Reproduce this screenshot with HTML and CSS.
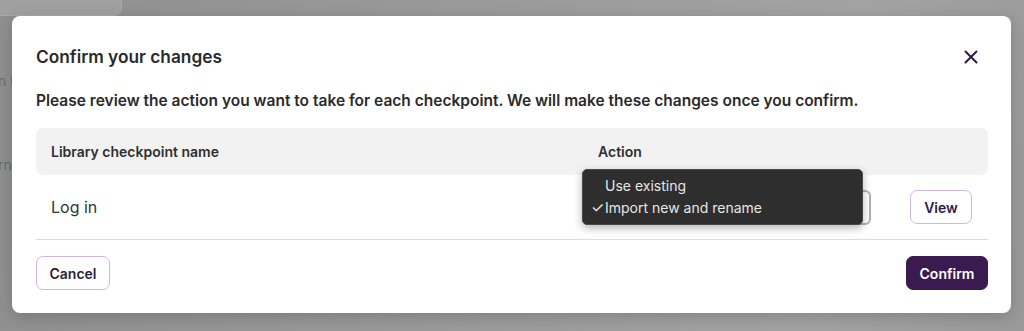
FILE: index.html
```html
<!DOCTYPE html>
<html>
<head>
<meta charset="utf-8">
<link rel="stylesheet" href="styles.css">
</head>
<body>
<div class="backdrop">
  <div class="ghost-card"></div>
  <div class="ghost-text">n t</div>
  <div class="ghost-text2">rn</div>
  <div class="modal">
    <div class="modal-head">
      <h1 class="title">Confirm your changes</h1>
      <button class="close" aria-label="Close">
        <svg width="14" height="14" viewBox="0 0 14 14"><path d="M1.5 1.5L12.5 12.5M12.5 1.5L1.5 12.5" stroke="#2e1a47" stroke-width="2" stroke-linecap="round"/></svg>
      </button>
    </div>
    <p class="desc">Please review the action you want to take for each checkpoint. We will make these changes once you confirm.</p>
    <div class="table">
      <div class="thead">
        <div class="th name-col">Library checkpoint name</div>
        <div class="th action-col">Action</div>
      </div>
      <div class="trow">
        <div class="td name-col">Log in</div>
        <div class="td action-cell">
          <div class="select">
            <div class="menu">
              <div class="opt"><span class="check"></span>Use existing</div>
              <div class="opt"><span class="check">✓</span>Import new and rename</div>
            </div>
          </div>
          <button class="btn btn-outline view">View</button>
        </div>
      </div>
    </div>
    <div class="footer">
      <button class="btn btn-outline cancel">Cancel</button>
      <button class="btn btn-primary">Confirm</button>
    </div>
  </div>
</div>
</body>
</html>
```
FILE: styles.css
```css
* { box-sizing: border-box; }
html, body { margin: 0; padding: 0; }
body {
  font-family: Inter, "Noto Sans", "Liberation Sans", sans-serif;
  width: 1024px;
  height: 331px;
  overflow: hidden;
}
.backdrop {
  position: relative;
  width: 1024px;
  height: 331px;
  background: linear-gradient(100deg, #8f8f8f 0%, #999 40%, #a3a3a3 80%, #9a9a9a 100%);
  padding: 16px 13px 18px 12px;
}
.ghost-card {
  position: absolute;
  left: -10px; top: -10px;
  width: 132px; height: 26px;
  border: 1px solid #a8a8a8;
  border-radius: 8px;
  background: #a0a0a0;
}
.ghost-text {
  position: absolute; left: -2px; top: 72px;
  color: #6a6a6a; font-size: 14px;
}
.ghost-text2 {
  position: absolute; left: -2px; top: 156px;
  color: #6a6a6a; font-size: 14px;
}
.modal {
  position: relative;
  background: #fff;
  border-radius: 8px;
  width: 999px;
  height: 297px;
  padding: 29px 23px 0 24px;
  box-shadow: 0 4px 16px rgba(0,0,0,0.18);
}
.modal-head {
  display: flex;
  align-items: center;
  justify-content: space-between;
  height: 24px;
}
.title {
  margin: 0;
  font-size: 17.3px;
  line-height: 24px;
  font-weight: 600;
  color: #2a2a2a;
}
.close {
  border: 0;
  background: transparent;
  padding: 0;
  width: 14px; height: 14px;
  margin-right: 10px;
  display: flex;
}
.desc {
  margin: 22px 0 0;
  font-size: 15.5px;
  line-height: 20px;
  font-weight: 600;
  color: #2a2a2a;
}
.table {
  margin-top: 17px;
  width: 952px;
}
.thead {
  display: grid;
  grid-template-columns: 547px 405px;
  height: 47px;
  align-items: center;
  background: #f2f2f2;
  border-radius: 7px;
}
.th {
  padding-left: 15px;
  font-size: 14px;
  font-weight: 600;
  color: #2f2f2f;
}
.trow {
  display: grid;
  grid-template-columns: 547px 405px;
  height: 65px;
  align-items: center;
  border-bottom: 1px solid #dcdcdc;
}
.td.name-col {
  padding-left: 15px;
  font-size: 16px;
  color: #333;
  padding-bottom: 1px;
}
.action-cell {
  display: flex;
  align-items: center;
  padding: 0 16px 0 7px;
}
.select {
  position: relative;
  width: 281px;
  height: 35px;
  border: 2px solid #b0b0b0;
  border-radius: 6px;
  background: #fff;
}
.menu {
  position: absolute;
  left: -10px;
  top: -23px;
  width: 281px;
  height: 56px;
  background: #2e2e2e;
  border: 1px solid #4a4a4a;
  border-radius: 5px;
  box-shadow: 0 3px 8px rgba(0,0,0,0.3);
  padding: 5px 0 0 8px;
}
.opt {
  display: flex;
  align-items: center;
  height: 22px;
  font-size: 14px;
  color: #e6e6e6;
}
.check {
  width: 14px;
  font-size: 15px;
  line-height: 1;
}
.btn {
  font-family: inherit;
  font-size: 14px;
  font-weight: 600;
  height: 34px;
  border-radius: 7px;
  padding: 0 15px;
  cursor: pointer;
}
.btn-outline {
  background: #fff;
  border: 1px solid #cfb6e6;
  color: #2a1f3a;
}
.cancel {
  width: 74px;
  padding: 0;
}
.view {
  margin-left: auto;
  width: 62px;
  padding: 0;
  color: #2e1a47;
}
.footer {
  display: flex;
  justify-content: space-between;
  margin-top: 16px;
  width: 952px;
}
.btn-primary {
  background: #3b1a50;
  border: 1px solid #3b1a50;
  color: #fff;
  width: 82px;
  padding: 0;
}
```
